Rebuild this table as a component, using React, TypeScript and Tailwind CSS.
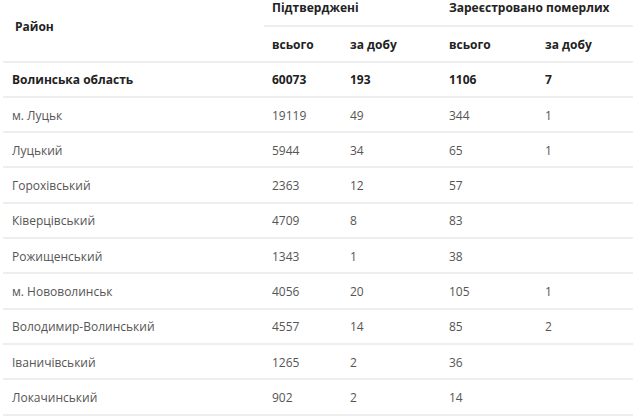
const rows: [string, string, string, string, string][] = [
  ["м. Луцьк", "19119", "49", "344", "1"],
  ["Луцький", "5944", "34", "65", "1"],
  ["Горохівський", "2363", "12", "57", ""],
  ["Ківерцівський", "4709", "8", "83", ""],
  ["Рожищенський", "1343", "1", "38", ""],
  ["м. Нововолинськ", "4056", "20", "105", "1"],
  ["Володимир-Волинський", "4557", "14", "85", "2"],
  ["Іваничівський", "1265", "2", "36", ""],
  ["Локачинський", "902", "2", "14", ""],
];

const App = () => {
  return (
    <div className="w-[640px] h-[417px] overflow-hidden bg-white" style={{ fontFamily: '"Open Sans", sans-serif' }}>
      <table className="ml-[3px] -mt-[9px] w-[630px] table-fixed border-collapse text-[12px] text-left">
        <colgroup>
          <col className="w-[261px]" />
          <col className="w-[78px]" />
          <col className="w-[99px]" />
          <col className="w-[96px]" />
          <col className="w-[96px]" />
        </colgroup>
        <thead className="text-[#222] font-bold">
          <tr className="h-[35.3px]">
            <th rowSpan={2} className="pl-[12px] pt-[2px] align-middle border-b-2 border-[#eeeeee]">
              Район
            </th>
            <th colSpan={2} className="pl-[8px] border-b-2 border-[#eeeeee]">
              Підтверджені
            </th>
            <th colSpan={2} className="pl-[8px] border-b-2 border-[#eeeeee]">
              Зареєстровано померлих
            </th>
          </tr>
          <tr className="h-[35.3px]">
            <th className="pl-[8px] pt-[2px] border-b-2 border-[#eeeeee]">всього</th>
            <th className="pl-[8px] pt-[2px] border-b-2 border-[#eeeeee]">за добу</th>
            <th className="pl-[8px] pt-[2px] border-b-2 border-[#eeeeee]">всього</th>
            <th className="pl-[8px] pt-[2px] border-b-2 border-[#eeeeee]">за добу</th>
          </tr>
        </thead>
        <tbody>
          <tr className="h-[35.3px] font-bold text-[#222] border-b-2 border-[#eeeeee]">
            <td className="pl-[9px] pt-[2px]">Волинська область</td>
            <td className="pl-[8px] pt-[2px]">60073</td>
            <td className="pl-[8px] pt-[2px]">193</td>
            <td className="pl-[8px] pt-[2px]">1106</td>
            <td className="pl-[8px] pt-[2px]">7</td>
          </tr>
          {rows.map((r, i) => (
            <tr key={i} className="h-[35.3px] text-[#555] border-b-2 border-[#eeeeee]">
              <td className="pl-[9px] pt-[2px]">{r[0]}</td>
              <td className="pl-[8px] pt-[2px]">{r[1]}</td>
              <td className="pl-[8px] pt-[2px]">{r[2]}</td>
              <td className="pl-[8px] pt-[2px]">{r[3]}</td>
              <td className="pl-[8px] pt-[2px]">{r[4]}</td>
            </tr>
          ))}
        </tbody>
      </table>
    </div>
  );
};

export default App;
